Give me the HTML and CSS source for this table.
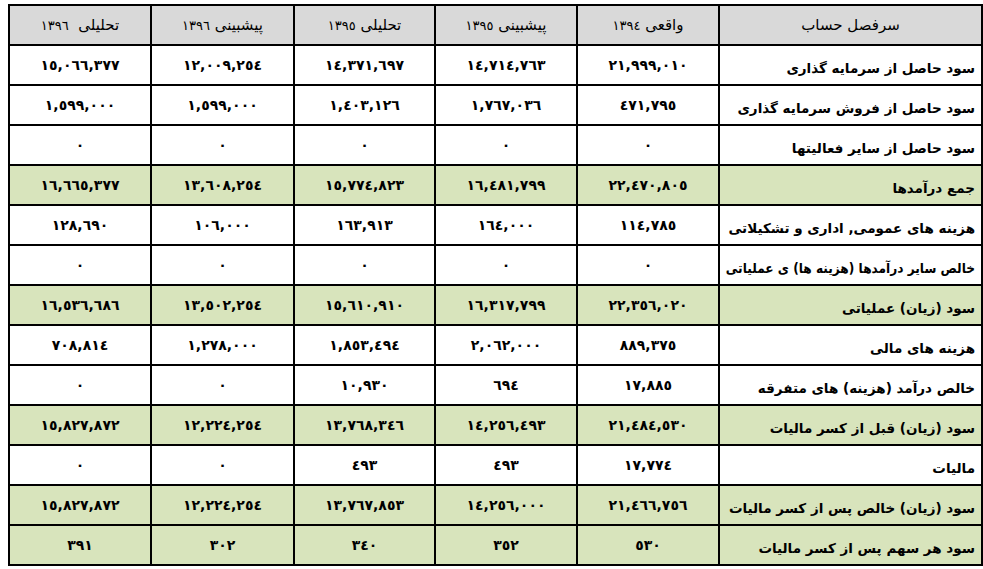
FILE: index.html
```html
<!DOCTYPE html>
<html lang="fa" dir="rtl">
<head>
<meta charset="utf-8">
<title>صورت سود و زیان</title>
<link rel="stylesheet" href="styles.css">
</head>
<body>
<table class="fin">
<colgroup>
<col class="c-label"><col class="c-a"><col class="c-b"><col class="c-c"><col class="c-d"><col class="c-e">
</colgroup>
<thead>
<tr class="head"><th>سرفصل حساب</th><th>واقعی <span class="yr">١٣٩٤</span></th><th>پیشبینی <span class="yr">١٣٩٥</span></th><th>تحلیلی <span class="yr">١٣٩٥</span></th><th>پیشبینی <span class="yr">١٣٩٦</span></th><th>تحلیلی&nbsp; <span class="yr">١٣٩٦</span></th></tr>
</thead>
<tbody>
<tr><td>سود حاصل از سرمایه گذاری</td><td>٢١,٩٩٩,٠١٠</td><td>١٤,٧١٤,٧٦٣</td><td>١٤,٣٧١,٦٩٧</td><td>١٢,٠٠٩,٢٥٤</td><td>١٥,٠٦٦,٣٧٧</td></tr>
<tr><td>سود حاصل از فروش سرمایه گذاری</td><td>٤٧١,٧٩٥</td><td>١,٧٦٧,٠٣٦</td><td>١,٤٠٣,١٢٦</td><td>١,٥٩٩,٠٠٠</td><td>١,٥٩٩,٠٠٠</td></tr>
<tr><td>سود حاصل از سایر فعالیتها</td><td>٠</td><td>٠</td><td>٠</td><td>٠</td><td>٠</td></tr>
<tr class="sum"><td>جمع درآمدها</td><td>٢٢,٤٧٠,٨٠٥</td><td>١٦,٤٨١,٧٩٩</td><td>١٥,٧٧٤,٨٢٣</td><td>١٣,٦٠٨,٢٥٤</td><td>١٦,٦٦٥,٣٧٧</td></tr>
<tr><td>هزینه های عمومی, اداری و تشکیلاتی</td><td>١١٤,٧٨٥</td><td>١٦٤,٠٠٠</td><td>١٦٣,٩١٣</td><td>١٠٦,٠٠٠</td><td>١٢٨,٦٩٠</td></tr>
<tr><td class="long">خالص سایر درآمدها (هزینه ها) ی عملیاتی</td><td>٠</td><td>٠</td><td>٠</td><td>٠</td><td>٠</td></tr>
<tr class="sum"><td>سود (زیان) عملیاتی</td><td>٢٢,٣٥٦,٠٢٠</td><td>١٦,٣١٧,٧٩٩</td><td>١٥,٦١٠,٩١٠</td><td>١٣,٥٠٢,٢٥٤</td><td>١٦,٥٣٦,٦٨٦</td></tr>
<tr><td>هزینه های مالی</td><td>٨٨٩,٣٧٥</td><td>٢,٠٦٢,٠٠٠</td><td>١,٨٥٣,٤٩٤</td><td>١,٢٧٨,٠٠٠</td><td>٧٠٨,٨١٤</td></tr>
<tr><td>خالص درآمد (هزینه) های متفرقه</td><td>١٧,٨٨٥</td><td>٦٩٤</td><td>١٠,٩٣٠</td><td>٠</td><td>٠</td></tr>
<tr class="sum"><td>سود (زیان) قبل از کسر مالیات</td><td>٢١,٤٨٤,٥٣٠</td><td>١٤,٢٥٦,٤٩٣</td><td>١٣,٧٦٨,٣٤٦</td><td>١٢,٢٢٤,٢٥٤</td><td>١٥,٨٢٧,٨٧٢</td></tr>
<tr><td>مالیات</td><td>١٧,٧٧٤</td><td>٤٩٣</td><td>٤٩٣</td><td>٠</td><td>٠</td></tr>
<tr class="sum"><td>سود (زیان) خالص پس از کسر مالیات</td><td>٢١,٤٦٦,٧٥٦</td><td>١٤,٢٥٦,٠٠٠</td><td>١٣,٧٦٧,٨٥٣</td><td>١٢,٢٢٤,٢٥٤</td><td>١٥,٨٢٧,٨٧٢</td></tr>
<tr class="sum"><td>سود هر سهم پس از کسر مالیات</td><td>٥٣٠</td><td>٣٥٢</td><td>٣٤٠</td><td>٣٠٢</td><td>٣٩١</td></tr>
</tbody>
</table>
</body>
</html>
```
FILE: styles.css
```css
html, body {
  margin: 0;
  padding: 0;
  background: #ffffff;
}
body {
  padding: 4px 0 0 4px;
  font-family: "DejaVu Sans", sans-serif;
  font-weight: bold;
  font-size: 14px;
  color: #000000;
}
.fin {
  border-collapse: collapse;
  table-layout: fixed;
  width: 973px;
  direction: rtl;
}
.c-label { width: 263px; }
.c-a { width: 142px; }
.c-b { width: 142px; }
.c-c { width: 141px; }
.c-d { width: 143px; }
.c-e { width: 142px; }
.fin th, .fin td {
  border: 2px solid #000000;
  height: 38px;
  padding: 0;
  line-height: 20px;
  text-align: center;
  vertical-align: middle;
  white-space: nowrap;
  font-weight: bold;
  overflow: hidden;
}
.fin td:first-child {
  text-align: right;
  padding-right: 6px;
  padding-top: 5px;
  height: 33px;
  font-size: 13.5px;
}
.fin td.long {
  font-stretch: condensed;
  font-size: 13.5px;
}
.head th {
  background: #d9d9d9;
  font-weight: normal;
  font-size: 15px;
}
.head .yr {
  font-size: 13px;
}
.sum td {
  background: #d8e4bc;
}
```
